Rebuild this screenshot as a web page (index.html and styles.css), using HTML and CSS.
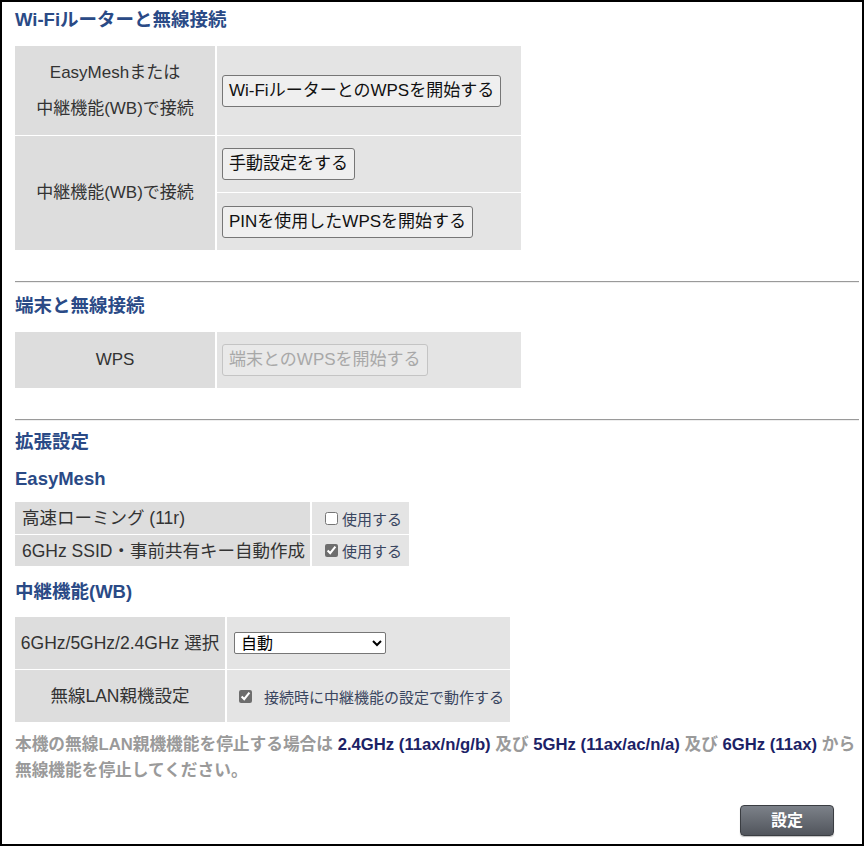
FILE: index.html
```html
<!DOCTYPE html>
<html lang="ja">

<head>
    <meta charset="utf-8">
    <meta name="viewport" content="width=device-width, initial-scale=1">
    <link rel="stylesheet" href="styles.css">
</head>

<body>
    <div class="page">
        <h2 class="title first">Wi-Fiルーターと無線接続</h2>
        <div class="grid grid-wide">
            <div class="label tall">EasyMeshまたは<br>中継機能(WB)で接続</div>
            <div class="cell row-a"><button type="button">Wi-FiルーターとのWPSを開始する</button></div>
            <div class="label span2">中継機能(WB)で接続</div>
            <div class="cell row-b"><button type="button">手動設定をする</button></div>
            <div class="cell row-c"><button type="button">PINを使用したWPSを開始する</button></div>
        </div>

        <hr class="sep">

        <h2 class="title after-sep">端末と無線接続</h2>
        <div class="grid grid-wide">
            <div class="label row-b">WPS</div>
            <div class="cell row-b"><button type="button" disabled>端末とのWPSを開始する</button></div>
        </div>

        <hr class="sep">

        <h2 class="title after-sep2">拡張設定</h2>
        <h3 class="title sub">EasyMesh</h3>
        <div class="grid grid-mesh">
            <div class="label left r1">高速ローミング (11r)</div>
            <div class="cell check r1"><label><input type="checkbox"> 使用する</label></div>
            <div class="label left r2">6GHz SSID・事前共有キー自動作成</div>
            <div class="cell check r2"><label><input type="checkbox" checked> 使用する</label></div>
        </div>

        <h3 class="title sub2">中継機能(WB)</h3>
        <div class="grid grid-wb">
            <div class="label r3">6GHz/5GHz/2.4GHz 選択</div>
            <div class="cell pick r3">
                <select name="band">
                    <option>自動</option>
                    <option>6GHz</option>
                    <option>5GHz</option>
                    <option>2.4GHz</option>
                </select>
            </div>
            <div class="label r3">無線LAN親機設定</div>
            <div class="cell pick r3"><label class="wide"><input type="checkbox" checked>接続時に中継機能の設定で動作する</label></div>
        </div>

        <p class="note">本機の無線LAN親機機能を停止する場合は <span class="hl">2.4GHz (11ax/n/g/b)</span> 及び <span class="hl">5GHz (11ax/ac/n/a)</span> 及び <span class="hl">6GHz (11ax)</span> から<br>無線機能を停止してください。</p>

        <div class="actions">
            <button type="button" class="submit">設定</button>
        </div>
    </div>
</body>

</html>
```

FILE: styles.css
```css
html,
body {
    margin: 0;
    padding: 0;
    background: #fff;
}

body {
    font-family: "Liberation Sans", "Noto Sans CJK JP", sans-serif;
    font-size: 17px;
    color: #333;
}

.page {
    box-sizing: border-box;
    width: 864px;
    height: 846px;
    border: 2px solid #000;
    padding: 0 3px 0 13px;
    overflow: hidden;
}

.title {
    margin: 0;
    color: #2a4a86;
    font-size: 18.5px;
    font-weight: bold;
    line-height: 20px;
}

.first {
    margin-top: 8px;
}

.after-sep {
    margin-top: 13px;
}

.after-sep2 {
    margin-top: 11px;
}

.sub {
    margin-top: 17px;
}

.sub2 {
    margin-top: 16px;
}

.sep {
    margin: 31px 0 0 0;
    border: 0;
    border-top: 1px solid #9a9a9a;
    border-bottom: 1px solid #eee;
    height: 0;
}

.grid {
    display: grid;
    gap: 1px 2px;
}

.grid-wide {
    grid-template-columns: 200px 304px;
    margin-top: 16px;
}

.grid-mesh {
    grid-template-columns: 295px 97px;
    margin-top: 13px;
}

.grid-wb {
    grid-template-columns: 210px 283px;
    margin-top: 15px;
}

.label {
    background: #dddddd;
    display: flex;
    align-items: center;
    justify-content: center;
    text-align: center;
    line-height: 24px;
}

.grid-mesh .label,
.grid-wb .label {
    font-size: 17.5px;
}

.label.left {
    justify-content: flex-start;
    padding-left: 7px;
}

.tall {
    line-height: 36px;
}

.span2 {
    grid-row: span 2;
}

.cell {
    background: #e4e4e4;
    display: flex;
    align-items: center;
    padding-left: 5px;
}

.row-a {
    height: 89px;
}

.row-b {
    height: 56px;
}

.row-c {
    height: 57px;
}

.r1 {
    height: 32px;
}

.r2 {
    height: 31px;
}

.r3 {
    height: 52px;
}

button {
    font-family: inherit;
    font-size: 17px;
    line-height: 24px;
    color: #111;
    background: #efefef;
    border: 1px solid #767676;
    border-radius: 3px;
    padding: 3px 6px;
}

button:disabled {
    color: #a8a8a8;
    background: #e9e9e9;
    border-color: #c4c4c4;
}

.check {
    padding-left: 9px;
}

.check label,
.wide {
    font-size: 15px;
    color: #3a4660;
    display: flex;
    align-items: center;
}

input[type="checkbox"] {
    width: 13px;
    height: 13px;
    margin: 0 4px 0 4px;
    accent-color: #6d6d6d;
}

.pick {
    padding-left: 7px;
}

.wide input[type="checkbox"] {
    margin: 0 12px 0 5px;
}

select {
    width: 152px;
    height: 22px;
    font-family: inherit;
    font-size: 16px;
    color: #000;
    background: #fff;
    border: 1px solid #767676;
    border-radius: 2px;
    padding: 0 2px;
}

.note {
    margin: 10px 0 0 0;
    font-size: 16.7px;
    font-weight: bold;
    line-height: 26px;
    color: #9a9a9a;
}

.hl {
    color: #1c2266;
}

.actions {
    display: flex;
    justify-content: flex-end;
    margin-top: 21px;
    padding-right: 25px;
}

.submit {
    width: 94px;
    height: 31px;
    padding: 0;
    font-size: 16px;
    font-weight: bold;
    color: #fff;
    background: linear-gradient(#7c8189, #51555c);
    border: 1px solid #3a3d42;
    border-radius: 4px;
    box-shadow: 0 1px 1px rgba(0, 0, 0, 0.25);
}
```
